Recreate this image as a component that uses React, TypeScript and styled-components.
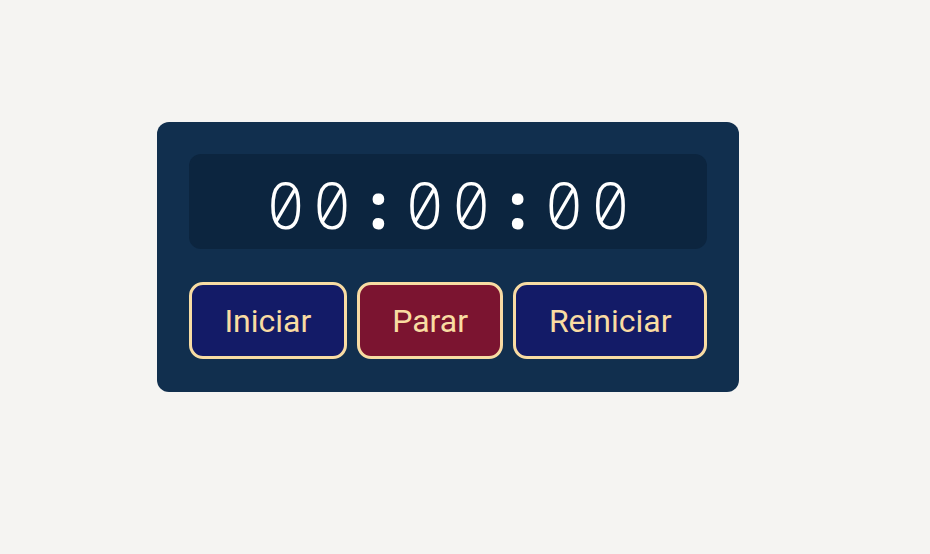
import styled, { createGlobalStyle } from 'styled-components';

const Global = createGlobalStyle`
  body {
    margin: 0;
    background: #f5f4f2;
    font-family: Roboto, "Liberation Sans", sans-serif;
  }
`;

const Page = styled.div`
  display: flex;
  align-items: flex-start;
  padding: 122px 0 0 157px;
  min-height: 554px;
  box-sizing: border-box;
`;

const Card = styled.div`
  width: 582px;
  box-sizing: border-box;
  padding: 32px 32px 33px;
  background: #112f4e;
  border-radius: 12px;
  display: flex;
  flex-direction: column;
  gap: 33px;
`;

const Display = styled.div`
  height: 95px;
  border-radius: 12px;
  background: #0c253f;
  display: flex;
  align-items: center;
  justify-content: center;
  padding-top: 6px;
  box-sizing: border-box;
`;

const Time = styled.span`
  font-family: "Noto Sans Mono", "DejaVu Sans Mono", monospace;
  font-weight: 300;
  font-size: 64px;
  line-height: 1;
  letter-spacing: 8px;
  margin-right: -8px;
  font-variant-numeric: slashed-zero;
  color: #ffffff;
`;

const Colon = styled.span`
  font-weight: 700;
`;

const Controls = styled.div`
  display: flex;
  gap: 10px;
`;

const Button = styled.button<{ $variant?: 'stop' }>`
  flex: 1 1 auto;
  height: 77px;
  padding: 0 24px;
  border: 3px solid #f8dca3;
  border-radius: 14px;
  background: ${({ $variant }) => ($variant === 'stop' ? '#7b1430' : '#131b67')};
  color: #f9dca2;
  font-family: Roboto, "Liberation Sans", sans-serif;
  font-size: 32px;
  cursor: pointer;
`;

const time = ['00', '00', '00'];

export default function App() {
  return (
    <>
      <Global />
      <Page>
        <Card>
          <Display>
            <Time>
              {time[0]}
              <Colon>:</Colon>
              {time[1]}
              <Colon>:</Colon>
              {time[2]}
            </Time>
          </Display>
          <Controls>
            <Button>Iniciar</Button>
            <Button $variant="stop">Parar</Button>
            <Button>Reiniciar</Button>
          </Controls>
        </Card>
      </Page>
    </>
  );
}
